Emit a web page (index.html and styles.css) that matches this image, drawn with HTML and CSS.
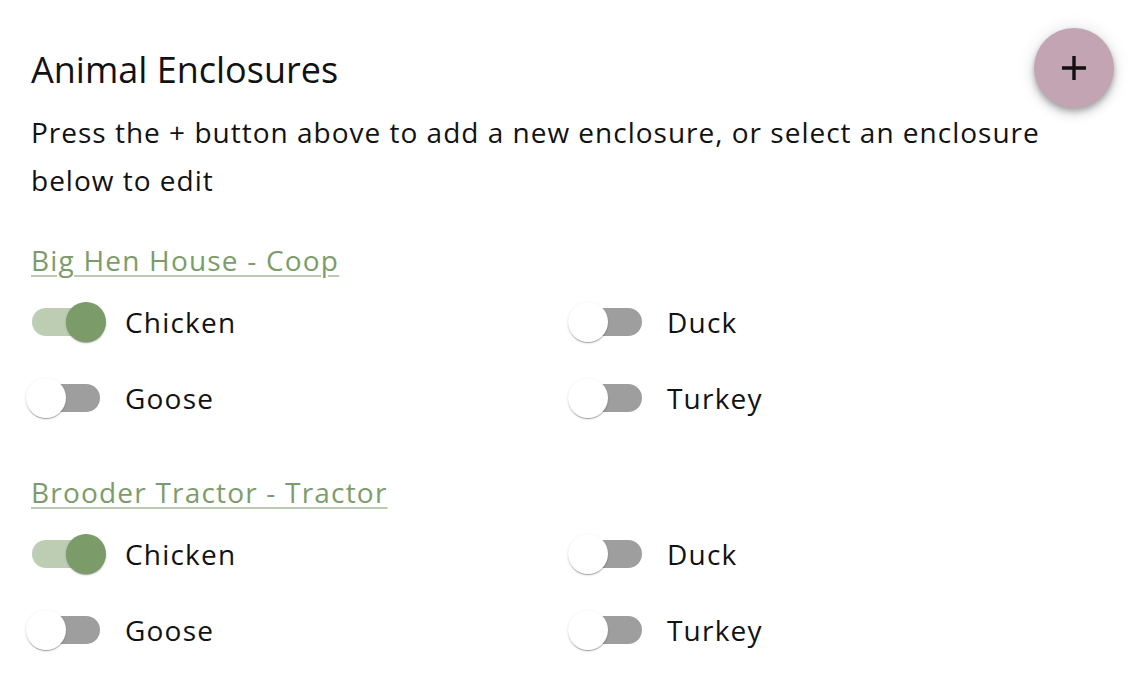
FILE: index.html
```html
<!DOCTYPE html>
<html>
<head>
<meta charset="utf-8">
<link rel="stylesheet" href="styles.css">
</head>
<body>
<main class="page">
  <header class="header">
    <h1 class="title">Animal Enclosures</h1>
    <button class="fab" aria-label="Add enclosure">
      <svg width="32" height="32" viewBox="0 0 32 32"><path d="M16 4v24M4 16h24" stroke="#111" stroke-width="3.4" fill="none"/></svg>
    </button>
  </header>
  <p class="intro">Press the + button above to add a new enclosure, or select an enclosure below to edit</p>

  <section class="enclosure">
    <a class="enc-link" href="#">Big Hen House - Coop</a>
    <div class="animals">
      <label class="toggle"><span class="switch on"><span class="thumb"></span></span><span class="label">Chicken</span></label>
      <label class="toggle"><span class="switch"><span class="thumb"></span></span><span class="label">Duck</span></label>
      <label class="toggle"><span class="switch"><span class="thumb"></span></span><span class="label">Goose</span></label>
      <label class="toggle"><span class="switch"><span class="thumb"></span></span><span class="label">Turkey</span></label>
    </div>
  </section>

  <section class="enclosure">
    <a class="enc-link" href="#">Brooder Tractor - Tractor</a>
    <div class="animals">
      <label class="toggle"><span class="switch on"><span class="thumb"></span></span><span class="label">Chicken</span></label>
      <label class="toggle"><span class="switch"><span class="thumb"></span></span><span class="label">Duck</span></label>
      <label class="toggle"><span class="switch"><span class="thumb"></span></span><span class="label">Goose</span></label>
      <label class="toggle"><span class="switch"><span class="thumb"></span></span><span class="label">Turkey</span></label>
    </div>
  </section>
</main>
</body>
</html>
```

FILE: styles.css
```css
html, body {
  margin: 0;
  padding: 0;
  background: #ffffff;
}
body {
  font-family: "Open Sans", "Lato", sans-serif;
  color: #121212;
}
.page {
  width: 1084px;
  padding: 28px 0 0 31px;
}
.header {
  display: flex;
  align-items: center;
  justify-content: space-between;
  height: 80px;
}
.title {
  margin: 0;
  font-size: 36px;
  font-weight: 400;
  line-height: 48px;
  padding-top: 4px;
}
.fab {
  width: 80px;
  height: 80px;
  border-radius: 50%;
  border: none;
  background: #c2a4b3;
  display: flex;
  align-items: center;
  justify-content: center;
  padding: 0;
  box-shadow: 0 6px 10px rgba(0,0,0,0.14), 0 1px 18px rgba(0,0,0,0.12), 0 3px 5px rgba(0,0,0,0.2);
  margin-right: 1px;
}
.intro {
  margin: 0;
  font-size: 28px;
  line-height: 48px;
  letter-spacing: 1px;
  width: 1070px;
}
.enclosure {
  margin-top: 32px;
}
.enc-link {
  display: inline-block;
  font-size: 28px;
  line-height: 48px;
  letter-spacing: 1.2px;
  color: #7c9c6b;
  text-decoration: underline;
  text-decoration-color: #b9cbb0;
  text-decoration-thickness: 2px;
  text-underline-offset: 4px;
}
.animals {
  display: grid;
  grid-template-columns: 542px 542px;
  grid-auto-rows: 76px;
}
.toggle {
  display: flex;
  align-items: center;
  gap: 25px;
  font-size: 28px;
  letter-spacing: 1.2px;
}
.switch {
  position: relative;
  width: 68px;
  height: 28px;
  border-radius: 14px;
  background: #9e9e9e;
  margin-left: 1px;
  flex: none;
}
.switch.on {
  background: #bccdb3;
}
.thumb {
  position: absolute;
  top: -6px;
  left: -6px;
  width: 40px;
  height: 40px;
  border-radius: 50%;
  background: #ffffff;
  box-shadow: 0 2px 1px -1px rgba(0,0,0,0.2), 0 1px 1px 0 rgba(0,0,0,0.14), 0 1px 3px 0 rgba(0,0,0,0.12);
}
.switch.on .thumb {
  left: 34px;
  background: #7b9b68;
}
```
